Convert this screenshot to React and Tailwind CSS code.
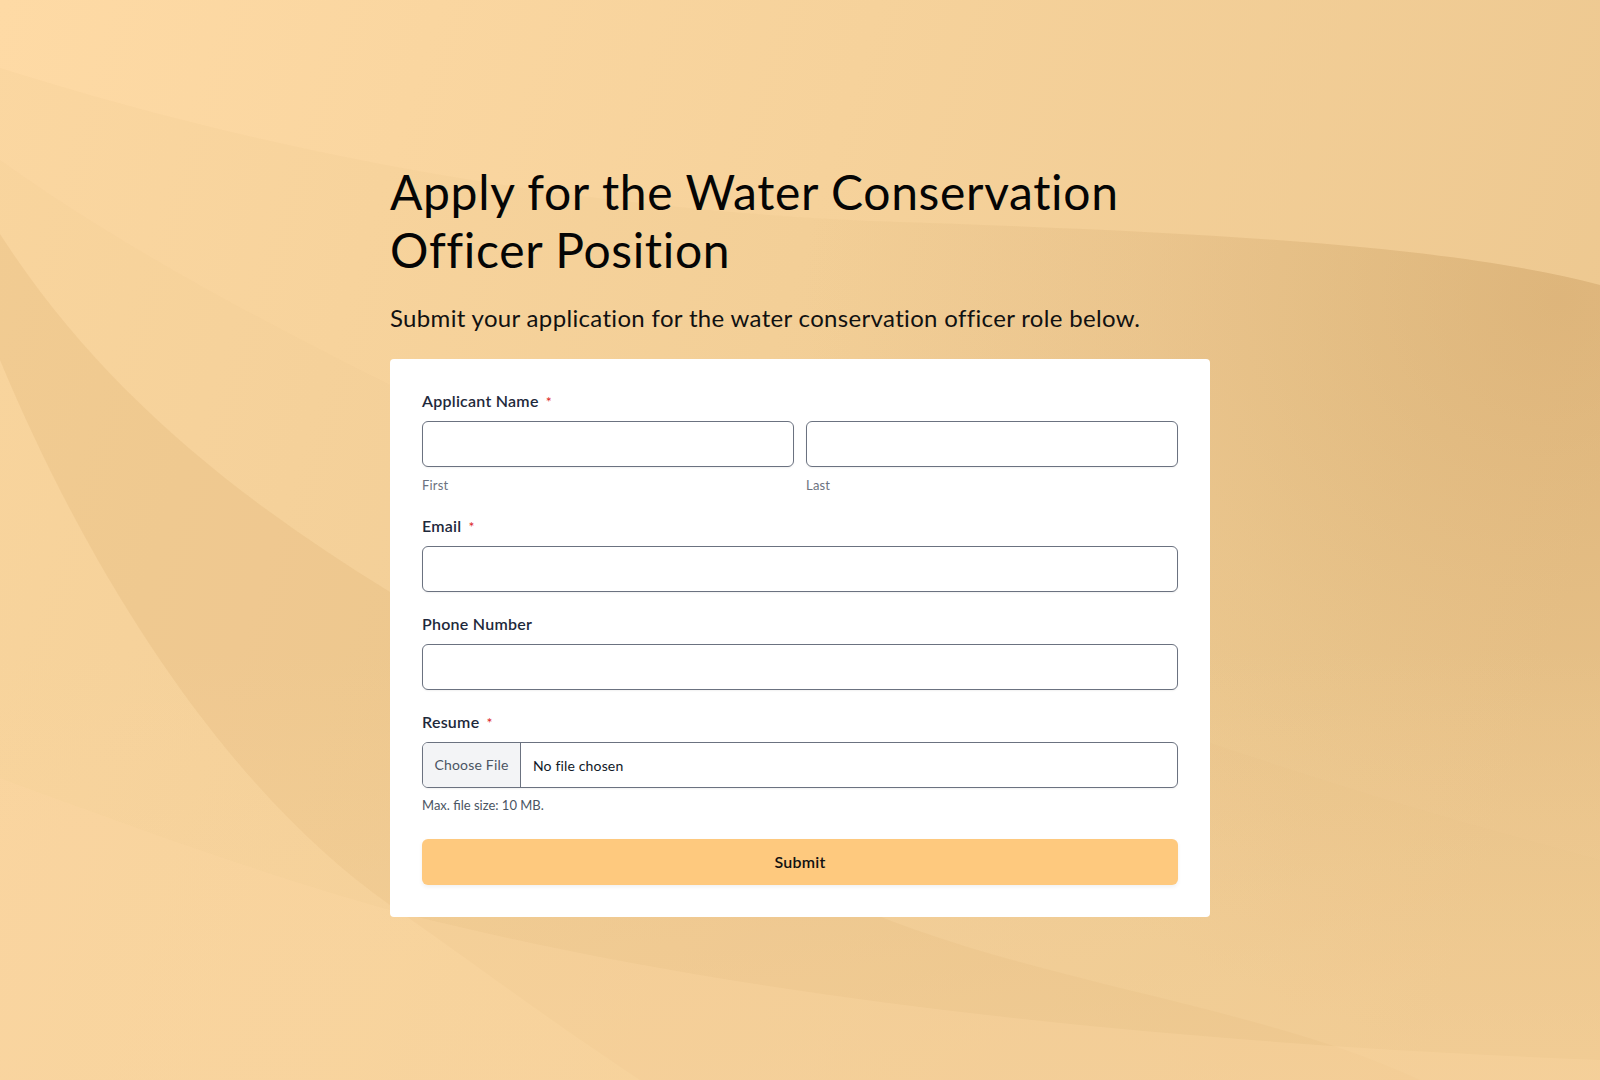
import React from "react";

function Background() {
  return (
    <svg
      className="absolute inset-0 h-full w-full"
      viewBox="0 0 1600 1080"
      preserveAspectRatio="none"
      aria-hidden="true"
    >
      <defs>
        <linearGradient id="base" x1="0" y1="0" x2="1600" y2="500" gradientUnits="userSpaceOnUse">
          <stop offset="0" stopColor="#fedaa5" />
          <stop offset="0.5" stopColor="#f6d29b" />
          <stop offset="1" stopColor="#edc890" />
        </linearGradient>
        <radialGradient id="corner" cx="1560" cy="300" r="760" gradientUnits="userSpaceOnUse">
          <stop offset="0" stopColor="#c08f52" stopOpacity="0.32" />
          <stop offset="0.55" stopColor="#c08f52" stopOpacity="0.1" />
          <stop offset="1" stopColor="#c08f52" stopOpacity="0" />
        </radialGradient>
        <linearGradient id="bottomfade" x1="0" y1="650" x2="0" y2="1080" gradientUnits="userSpaceOnUse">
          <stop offset="0" stopColor="#fedaa5" stopOpacity="0" />
          <stop offset="1" stopColor="#fad6a0" stopOpacity="0.45" />
        </linearGradient>
      </defs>
      <rect x="0" y="0" width="1600" height="1080" fill="url(#base)" />
      <path
        d="M0,68 C260,150 560,210 900,222 C1200,232 1450,245 1600,285 L1600,1080 L0,1080 Z"
        fill="#d2a264"
        fillOpacity="0.06"
      />
      <path
        d="M0,68 C260,150 560,210 900,222 C1200,232 1450,245 1600,285 L1600,1080 L0,1080 Z"
        fill="url(#corner)"
      />
      <path
        d="M0,160 C140,260 300,340 420,400 C700,540 1000,700 1600,860 L1600,1080 L0,1080 Z"
        fill="#d9ad70"
        fillOpacity="0.05"
      />
      <path
        d="M0,234 C100,390 240,500 390,592 C560,700 700,820 820,890 C1000,980 1250,1000 1420,1080 L640,1080 C520,1000 470,960 390,905 C240,800 100,600 0,360 Z"
        fill="#d4a465"
        fillOpacity="0.19"
      />
      <path
        d="M0,778 C140,830 280,880 390,910 C700,990 1100,1040 1600,1060 L1600,1080 L0,1080 Z"
        fill="#fbd8a2"
        fillOpacity="0.35"
      />
      <rect x="0" y="0" width="1600" height="1080" fill="url(#bottomfade)" />
    </svg>
  );
}

function Label({ children, required }) {
  return (
    <div className="flex h-5 items-center text-[16px] font-semibold leading-5 tracking-[0.25px] text-[#1e293b]">
      <span>{children}</span>
      {required && <span className="ml-[7px] mt-[2px] text-[14px] font-normal leading-none text-[#dc2626]">*</span>}
    </div>
  );
}

function TextInput() {
  return (
    <div className="h-[46px] w-full rounded-[6px] border border-[#6b7280] bg-white shadow-[0_1px_2px_rgba(0,0,0,0.06)]" />
  );
}

export default function App() {
  return (
    <div
      className="relative min-h-[1080px] w-full overflow-hidden"
      style={{ fontFamily: "Lato, 'Noto Sans', sans-serif" }}
    >
      <Background />
      <div className="relative mx-auto w-[820px] pt-[163px]">
        <h1 className="text-[48px] font-normal leading-[1.2] tracking-[0.65px] text-[#050505]">
          Apply for the Water Conservation
          <br />
          Officer Position
        </h1>
        <p className="mt-[23px] text-[24px] leading-[33px] tracking-[0.33px] text-[#111111]">
          Submit your application for the water conservation officer role below.
        </p>
        <div className="mt-[25px] rounded-[4px] bg-white p-8">
          <div className="flex flex-col gap-[22px]">
            <div>
              <Label required>Applicant Name</Label>
              <div className="mt-[10px] grid grid-cols-2 gap-3">
                <div>
                  <TextInput />
                  <div className="mt-[9px] text-[13px] leading-[18px] tracking-[0.2px] text-[#6b7280]">First</div>
                </div>
                <div>
                  <TextInput />
                  <div className="mt-[9px] text-[13px] leading-[18px] tracking-[0.2px] text-[#6b7280]">Last</div>
                </div>
              </div>
            </div>
            <div>
              <Label required>Email</Label>
              <div className="mt-[10px]">
                <TextInput />
              </div>
            </div>
            <div>
              <Label>Phone Number</Label>
              <div className="mt-[10px]">
                <TextInput />
              </div>
            </div>
            <div>
              <Label required>Resume</Label>
              <div className="mt-[10px] flex h-[46px] w-full overflow-hidden rounded-[6px] border border-[#6b7280] bg-white shadow-[0_1px_2px_rgba(0,0,0,0.06)]">
                <div className="flex w-[98px] items-center justify-center border-r border-[#6b7280] bg-[#f3f4f6] pb-[2px] text-[14px] tracking-[0.2px] text-[#4b5563]">
                  Choose File
                </div>
                <div className="flex items-center pl-3 text-[14px] tracking-[0.15px] text-[#111827]">No file chosen</div>
              </div>
              <div className="mt-2 text-[13px] leading-[18px] text-[#4b5563]">Max. file size: 10 MB.</div>
            </div>
          </div>
          <button
            type="button"
            className="mt-[25px] flex h-[46px] w-full items-center justify-center rounded-[6px] bg-[#fec97e] text-[16px] font-semibold tracking-[0.25px] text-[#111111] shadow-[0_2px_4px_rgba(0,0,0,0.06)]"
          >
            Submit
          </button>
        </div>
      </div>
    </div>
  );
}
